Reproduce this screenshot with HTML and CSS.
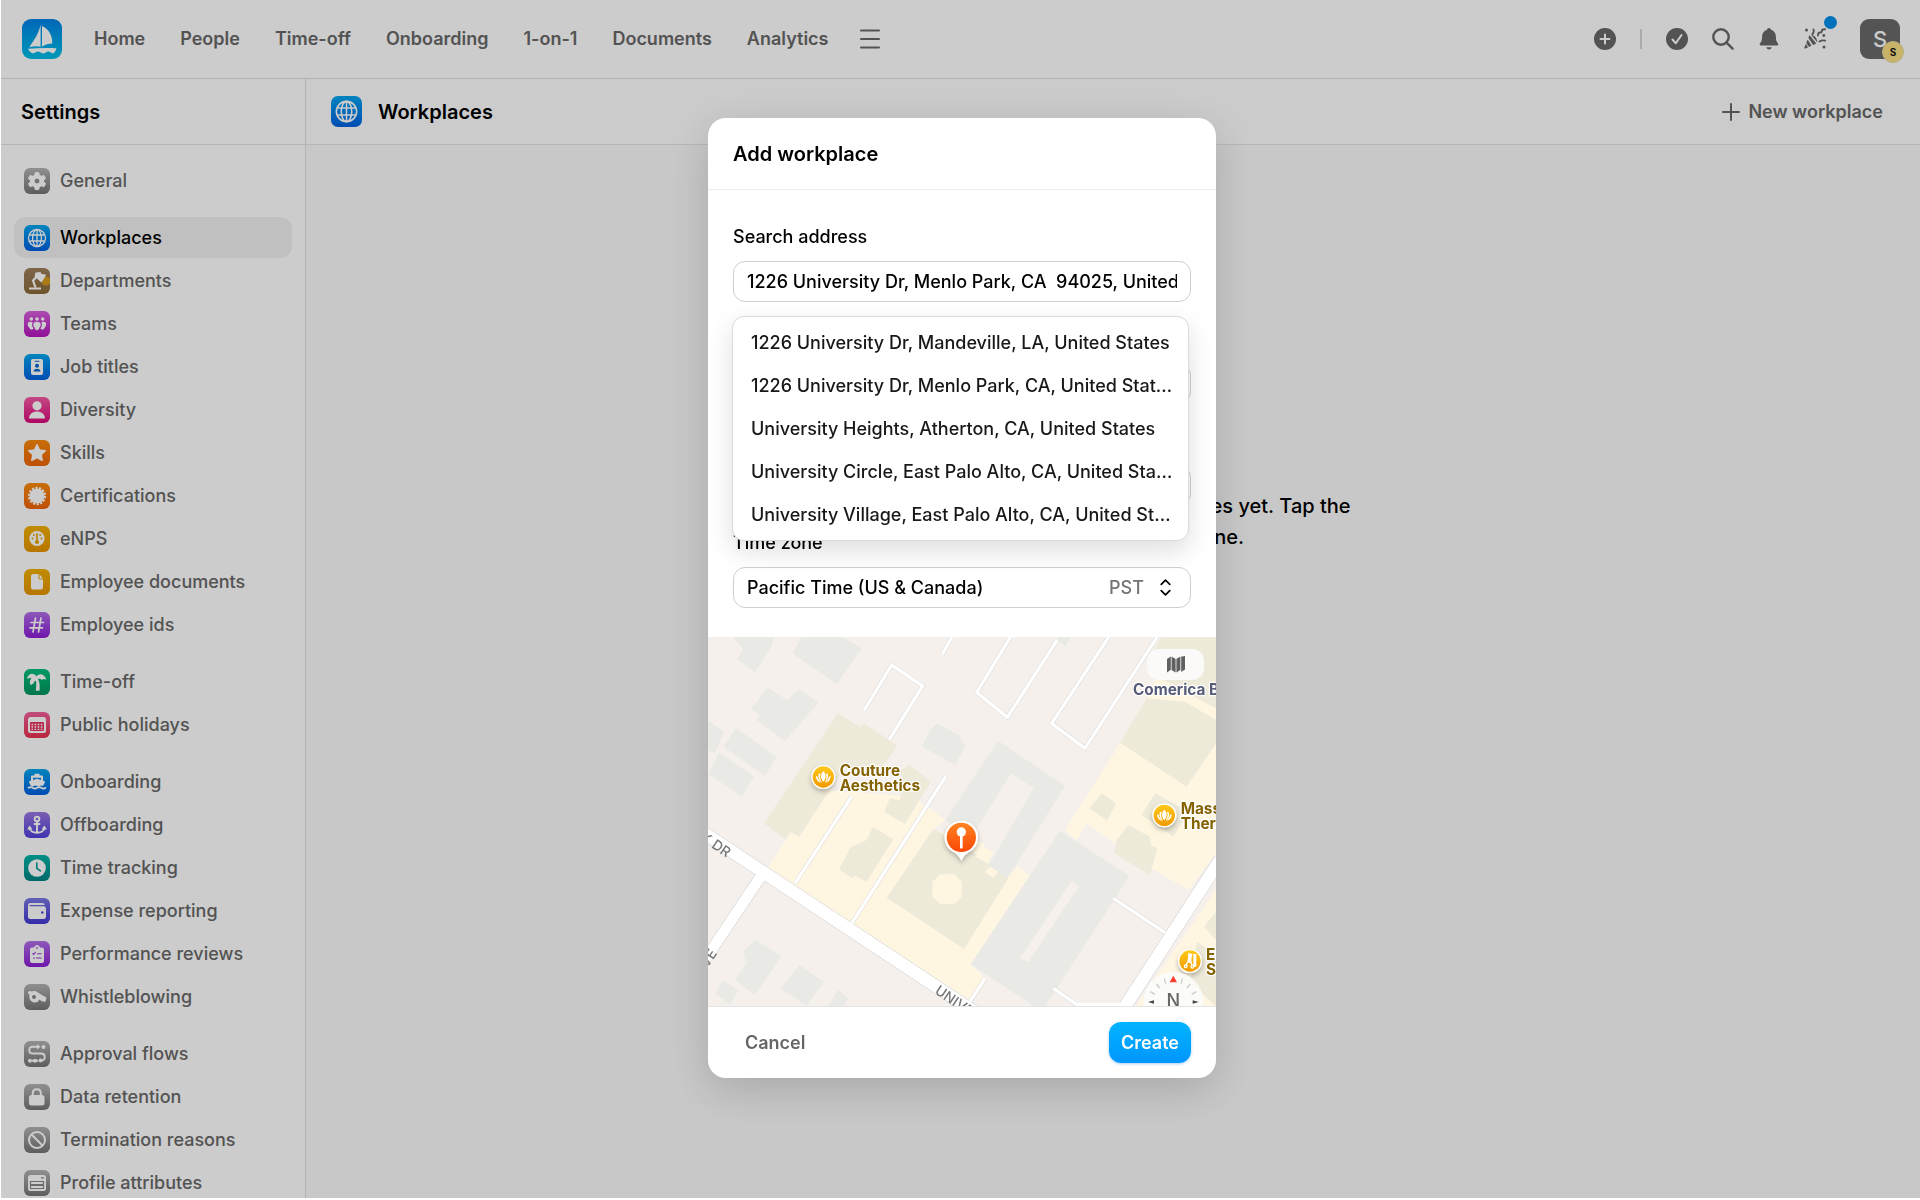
FILE: index.html
```html
<!DOCTYPE html>
<html lang="en">
<head>
<meta charset="utf-8">
<meta name="viewport" content="width=device-width, initial-scale=1">
<title>Workplaces – Settings</title>
<link rel="stylesheet" href="styles.css">
</head>
<body>
<svg class="defs" aria-hidden="true">
  <symbol id="globe" viewBox="0 0 26 26"><g fill="none" stroke="#fff" stroke-width="1.300"><circle cx="13" cy="13" r="8.500"/><ellipse cx="13" cy="13" rx="4.400" ry="8.500"/><path d="M13 4.500v17M5.500 10h15M5.500 16h15"/></g></symbol>
  <symbol id="lotus" viewBox="-24 -24 48 48"><path fill="#fff" d="M0-17c9 8 9 22 0 31c-9-9-9-23 0-31zM-12-11c-5 8-3 20 8 26c-6-8-7-17-4-24zM12-11c5 8 3 20-8 26c6-8 7-17 4-24zM-22-3c0 12 7 19 18 19c-8-4-12-10-13-17zM22-3c0 12-7 19-18 19c8-4 12-10 13-17z"/></symbol>
</svg>

<div class="app">
  <header class="topbar">
    <a class="logo" href="#" aria-label="Home page">
      <svg viewBox="0 0 40 40"><path fill="#fff" d="M18.600 5.500v22.300C15 26.900 11 27 7.500 28.200C11 22 16.500 16 18.600 5.500zM20 7c6.500 3 10.500 9 10.300 17.500c-3.500.2-7 1-10.300 3z"/><path fill="#fff" d="M6 29.800c9-.8 18-1.200 28.500-.6c-.6 2.200-1.700 3.800-3.100 5.300c-2-.2-3.200-1.900-5-1.900c-2 0-3 2-5.200 2s-3.200-2-5.200-2s-3.200 1.900-5.500 1.900c-2.100-1-3.600-2.700-4.500-4.700z"/></svg>
    </a>
    <nav class="nav" aria-label="Main">
      <a href="#">Home</a><a href="#">People</a><a href="#">Time-off</a><a href="#">Onboarding</a><a href="#">1-on-1</a><a href="#">Documents</a><a href="#">Analytics</a>
    </nav>
    <button class="icon-btn menu" aria-label="More"><svg viewBox="0 0 22 22"><path d="M2 2.500h18M2 11h18M2 19.500h18" fill="none" stroke="currentColor" stroke-width="2" stroke-linecap="round"/></svg></button>
    <div class="tools">
      <button class="icon-btn" aria-label="Add"><svg viewBox="0 0 22 22"><circle cx="11" cy="11" r="11" fill="currentColor"/><path d="M11 6.500v9M6.500 11h9" stroke="#fff" stroke-width="2" stroke-linecap="round"/></svg></button>
      <span class="divider"></span>
      <button class="icon-btn" aria-label="Tasks"><svg viewBox="0 0 22 22"><circle cx="11" cy="11" r="11" fill="currentColor"/><path d="M6.500 11.500l3.300 3.800L15.500 7" fill="none" stroke="#fff" stroke-width="2" stroke-linecap="round" stroke-linejoin="round"/></svg></button>
      <button class="icon-btn" aria-label="Search"><svg viewBox="0 0 22 22"><g fill="none" stroke="currentColor" stroke-width="2.400" stroke-linecap="round"><circle cx="9" cy="9" r="7.700"/><path d="M14.800 14.800l5.800 5.800"/></g></svg></button>
      <button class="icon-btn" aria-label="Notifications"><svg viewBox="0 0 22 22"><path fill="currentColor" d="M11 0c1.200 0 1.900.8 2 1.700c3.300 1 4.800 3.800 4.900 6.800c.1 4.200.9 5.500 2 6.700c.8.900.5 2.300-.9 2.300H3c-1.400 0-1.700-1.400-.9-2.300c1.100-1.200 1.900-2.500 2-6.700C4.200 5.500 5.700 2.700 9 1.700C9.100.8 9.800 0 11 0zM8.300 19.200h5.400c-.4 1.500-1.400 2.200-2.700 2.200s-2.300-.7-2.700-2.200z"/></svg></button>
      <button class="icon-btn news" aria-label="What's new"><svg viewBox="0 0 22 22"><g fill="none" stroke="currentColor" stroke-width="1.900" stroke-linecap="round"><path d="M9.500 1.500q.8 2.500-1 4.500M14 7.500q-.3-3 2.200-3q1.800 0 1.600-1.800q0-1.600 3.200-1.400M15.500 13.500q2.500-1.800 5.500-.8"/></g><path fill="currentColor" d="M3.600 11.600l3.900 6l-2.500 1.300l-2.700-4zM5.600 7.200l6.700 8.400l-3.200 1.500l-4.800-7.300zM7 6.800c3.800.6 6.200 3.600 6.400 7.600zM1.900 15.900l2.200 3.400l-2.500 1.200q-1.700.5-1.200-1.200z"/><circle cx="2.500" cy="2" r="1.500" fill="currentColor"/><circle cx="19.800" cy="7.500" r="1.400" fill="currentColor"/><circle cx="20" cy="19" r="1.500" fill="currentColor"/></svg></button>
      <button class="avatar" aria-label="Account">S<span class="avatar-badge">S</span></button>
    </div>
  </header>

  <div class="columns">
    <aside class="sidebar">
      <h2 class="bar sidebar-title">Settings</h2>
      <nav class="settings" aria-label="Settings">
        <div class="group">
          <a href="#"><svg class="tile gray" viewBox="0 0 26 26"><path fill="#fff" fill-rule="evenodd" stroke="#fff" stroke-width="1" stroke-linejoin="round" d="M11.300 4.500h3.400l.6 2.700l2 1.100l2.600-.9l1.700 3l-2 1.800v1.700l2 1.800l-1.700 3l-2.600-.9l-2 1.100l-.6 2.600h-3.400l-.6-2.600l-2-1.100l-2.600.9l-1.700-3l2-1.800v-1.700l-2-1.800l1.700-3l2.600.9l2-1.100zM13 10a3 3 0 1 0 0 6a3 3 0 1 0 0-6z"/></svg>General</a>
        </div>
        <div class="group">
          <a class="current" href="#" aria-current="page"><svg class="tile blue"><use href="#globe"/></svg>Workplaces</a>
          <a href="#"><svg class="tile brown" viewBox="0 0 26 26"><circle cx="22" cy="13" r="4.500" fill="#ffb400" opacity=".6"/><path fill="#fff" d="M11.500 4.500l5-.5l1 2l4.500.5l-1 2.500l-3.500 5.500l-7-6zM5 19.500h12v2H5z"/><path d="M11.500 19.500l-2.500-7l4.500-4.500" fill="none" stroke="#fff" stroke-width="2.200" stroke-linejoin="round"/></svg>Departments</a>
          <a href="#"><svg class="tile magenta" viewBox="0 0 26 26"><g fill="#fff"><circle cx="7.300" cy="8" r="1.800"/><circle cx="13" cy="8" r="1.800"/><circle cx="18.700" cy="8" r="1.800"/><path d="M8.600 11.500c-1 2-.6 4 1 6c-1.800 1.700-3.600 1-4.200-.8C3.300 15 3 11 6 10.800c1 0 2 .1 2.600.7zM17.400 11.500c1 2 .6 4-1 6c1.800 1.700 3.600 1 4.200-.8c2.100-1.700 2.400-5.700-.6-5.900c-1 0-2 .1-2.600.7zM13 10.800c5 0 4 4.700 2.300 6c-.3 3.200-4.300 3.200-4.600 0c-1.700-1.300-2.700-6 2.300-6z"/></g></svg>Teams</a>
          <a href="#"><svg class="tile blue" viewBox="0 0 26 26"><rect x="7" y="5" width="12" height="16" rx="2" fill="#fff"/><g fill="#06c"><rect x="10.500" y="6.800" width="5" height="1" rx=".5"/><circle cx="13" cy="11.800" r="2"/><path d="M9.500 17.500c0-3.800 7-3.800 7 0z"/></g></svg>Job titles</a>
          <a href="#"><svg class="tile pink" viewBox="0 0 26 26"><circle cx="13" cy="8.800" r="4.600" fill="#fff"/><path fill="#fff" d="M5 21.500c0-9.500 16-9.500 16 0z"/></svg>Diversity</a>
          <a href="#"><svg class="tile orange" viewBox="0 0 26 26"><path fill="#fff" stroke="#fff" stroke-width="1.500" stroke-linejoin="round" d="M13 4.800l2.500 5.200l5.800.7l-4.200 4l1.100 5.600L13 17.500l-5.200 2.800l1.100-5.600l-4.200-4l5.800-.7z"/></svg>Skills</a>
          <a href="#"><svg class="tile orange" viewBox="0 0 26 26"><circle cx="13" cy="13" r="7.500" fill="#fff"/><circle cx="13" cy="13" r="8.200" fill="none" stroke="#fff" stroke-width="2" stroke-dasharray="2.200 1.480"/></svg>Certifications</a>
          <a href="#"><svg class="tile yellow" viewBox="0 0 26 26"><circle cx="13" cy="12.500" r="7.600" fill="#fff"/><g fill="#e6a000"><circle cx="8.500" cy="12.500" r="1"/><circle cx="17.500" cy="12.500" r="1"/><circle cx="9.800" cy="9" r="1"/><circle cx="16.200" cy="9" r="1"/><circle cx="13" cy="16" r="2"/><rect x="12.200" y="7" width="1.600" height="8" rx=".8"/></g></svg>eNPS</a>
          <a href="#"><svg class="tile yellow" viewBox="0 0 26 26"><path fill="#fff" d="M9 5h5.500v4.200q0 1.300 1.300 1.300H19V18.500q0 2-2 2H9q-2 0-2-2V7q0-2 2-2zM15.500 5.500l3.500 4h-3.500z"/></svg>Employee documents</a>
          <a href="#"><svg class="tile purple" viewBox="0 0 26 26"><path fill="none" stroke="#fff" stroke-width="1.700" stroke-linecap="round" d="M11.500 6L9 20M17 6l-2.500 14M7 10.500h12.500M6 15.800h12.500"/></svg>Employee ids</a>
        </div>
        <div class="group">
          <a href="#"><svg class="tile green" viewBox="0 0 26 26"><path fill="#fff" d="M12.500 7.500c2-3.500 8-3 10 3.500c-2-1.500-3.500-1-4.500 0c-1.200-1.300-2.500-1.500-4-1.300c1.800 3.500 2 7.500 1.500 12h-3.700c.5-4.500.7-7.500.2-10c-1.500.5-2.500 1.300-2.700 3c-1 .1-1.600.6-2.300 1.600c-2-2.500-1-5.300.5-6.800c-1.500-.8-2.800-.5-4.500.5c.8-5.500 7-7 9.500-2.500z"/></svg>Time-off</a>
          <a href="#"><svg class="tile rose" viewBox="0 0 26 26"><rect x="4" y="5" width="18" height="16" rx="2.500" fill="#fff"/><rect x="6" y="10" width="14" height="9" rx="1" fill="#e8335f"/><path d="M7.500 12.500h11M7.500 15h11M7.500 17.300h11" stroke="#fff" stroke-width="1.300" stroke-dasharray="1.600 1.500"/></svg>Public holidays</a>
        </div>
        <div class="group">
          <a href="#"><svg class="tile blue" viewBox="0 0 26 26"><path fill="#fff" d="M10.500 4.800h5v1.700h2.500q1 0 1 1v4l1.500.7q.8.500.3 1.400L19 17q-1.500-.8-3 0t-3 0t-3 0t-3 0l-1.800-3.400q-.5-.9.300-1.400L7 11.500v-4q0-1 1-1h2.500z"/><path fill="#0a84e8" d="M9 8.700h8v2.200l-4-1.200l-4 1.200z"/><path d="M4.500 18.800q2-1.500 4.200 0t4.300 0t4.300 0t4.200 0" fill="none" stroke="#fff" stroke-width="1.700" stroke-linecap="round"/></svg>Onboarding</a>
          <a href="#"><svg class="tile violet" viewBox="0 0 26 26"><g fill="none" stroke="#fff" stroke-width="1.900" stroke-linecap="round"><circle cx="13" cy="7" r="2.300"/><path d="M13 9.500v11M10.500 12h5M5.500 15.500c.5 7 14.500 7 15 0"/></g><path fill="#fff" d="M3 17.500l2.800-4l2.700 4zM17.500 17.500l2.700-4l2.800 4z"/></svg>Offboarding</a>
          <a href="#"><svg class="tile teal" viewBox="0 0 26 26"><circle cx="13" cy="13" r="8.800" fill="#fff"/><path d="M12.800 8v5.300l3.600 2.600" fill="none" stroke="#009a92" stroke-width="1.600" stroke-linecap="round"/></svg>Time tracking</a>
          <a href="#"><svg class="tile indigo" viewBox="0 0 26 26"><path fill="#fff" d="M6.500 5h12q2 0 2.200 2H6q-.7 0-.7.600t.7.700h13.500q2.500 0 2.500 2.400v8q0 2.300-2.500 2.300h-13Q4 21 4 18.500v-11Q4 5 6.500 5z"/><circle cx="18.300" cy="14.500" r="1.200" fill="#4b43d8"/></svg>Expense reporting</a>
          <a href="#"><svg class="tile purple" viewBox="0 0 26 26"><path fill="#fff" d="M8 6.500h2q.5-2.500 3-2.500t3 2.500h2q2 0 2 2V20q0 2-2 2H8q-2 0-2-2V8.500q0-2 2-2z"/><path d="M8.800 12.500l1 1l1.600-2.200M13.500 12.800h3.700M9.500 17h1M12.500 17h4.700" fill="none" stroke="#9537dd" stroke-width="1.100" stroke-linecap="round"/><circle cx="13" cy="7" r=".9" fill="#a45be0"/></svg>Performance reviews</a>
          <a href="#"><svg class="tile gray" viewBox="0 0 26 26"><path fill="#fff" d="M4.500 7.500q1.500-1.200 3 0q4-1.500 7 1.500l8 4.500l-1 4q-3 1-6-2q-2.500 4.500-7 2.500q-4-2-3-7.500q-2.500-1-1-3z"/><circle cx="10" cy="13" r="2" fill="#888"/></svg>Whistleblowing</a>
        </div>
        <div class="group">
          <a href="#"><svg class="tile gray" viewBox="0 0 26 26"><path d="M14.500 5.800H9c-5 0-5 6.700 0 6.700h8c5 0 5 7 0 7M8 19.800h6" fill="none" stroke="#fff" stroke-width="1.900"/><g fill="#fff"><path d="M13 3l3.500 2.800L13 8.600z"/><circle cx="19.500" cy="6" r="2"/><circle cx="6" cy="19.800" r="2"/><circle cx="11" cy="19.800" r="2"/><circle cx="16.500" cy="19.500" r="2"/></g></svg>Approval flows</a>
          <a href="#"><svg class="tile gray" viewBox="0 0 26 26"><rect x="5" y="11" width="15.500" height="10.500" rx="2.500" fill="#fff"/><path d="M8.800 11.500V9.300c0-5.300 8-5.300 8 0v2.200" fill="none" stroke="#fff" stroke-width="2"/></svg>Data retention</a>
          <a href="#"><svg class="tile gray" viewBox="0 0 26 26"><g fill="none" stroke="#fff" stroke-width="2"><circle cx="13" cy="13" r="8"/><path d="M7.300 7.300l11.400 11.400"/></g></svg>Termination reasons</a>
          <a href="#"><svg class="tile gray" viewBox="0 0 26 26"><rect x="4" y="5" width="18" height="16" rx="2.500" fill="#fff"/><path d="M6.500 11.500h13v3h-13zM6.500 15.500h13v3h-13z" fill="none" stroke="#888" stroke-width="1.200"/><path d="M17 7.800h3" stroke="#888" stroke-width="1.200"/></svg>Profile attributes</a>
        </div>
      </nav>
    </aside>

    <main class="main">
      <div class="bar page-head">
        <svg class="tile large blue"><use href="#globe"/></svg>
        <h1>Workplaces</h1>
        <button class="new-btn"><svg viewBox="0 0 18 18"><path d="M9 1v16M1 9h16" stroke="currentColor" stroke-width="2" stroke-linecap="round"/></svg>New workplace</button>
      </div>
      <div class="empty">
        <p>You have not created any workplaces yet. Tap the<br>button above to create one.</p>
      </div>
    </main>
  </div>
</div>

<div class="overlay">
  <form class="modal" role="dialog" aria-labelledby="modal-title">
    <h2 class="modal-title" id="modal-title">Add workplace</h2>
    <div class="fields">
      <div class="field">
        <label for="search">Search address</label>
        <input id="search" type="text" value="1226 University Dr, Menlo Park, CA  94025, United States">
        <div class="suggestions">
          <button type="button">1226 University Dr, Mandeville, LA, United States</button>
          <button type="button">1226 University Dr, Menlo Park, CA, United States</button>
          <button type="button">University Heights, Atherton, CA, United States</button>
          <button type="button">University Circle, East Palo Alto, CA, United States</button>
          <button type="button">University Village, East Palo Alto, CA, United States</button>
        </div>
      </div>
      <div class="field"><label for="name">Name</label><input id="name" type="text"></div>
      <div class="field"><label for="address">Address</label><input id="address" type="text"></div>
      <div class="field">
        <label for="zone">Time zone</label>
        <div class="select">
          <select id="zone"><option>Pacific Time (US &amp; Canada)</option></select>
          <span class="zone-code">PST</span>
          <svg viewBox="0 0 10 16"><path d="M1 5l4-4l4 4M1 11l4 4l4-4" fill="none" stroke="currentColor" stroke-width="1.600" stroke-linecap="round" stroke-linejoin="round"/></svg>
        </div>
      </div>
    </div>

    <div class="map">
      <svg class="map-art" viewBox="24 21 1524 1107" preserveAspectRatio="xMidYMid slice">
        <defs>
          <linearGradient id="gold" x2="0" y2="1"><stop stop-color="#ffc919"/><stop offset="1" stop-color="#f09a00"/></linearGradient>
          <linearGradient id="ember" x2="0" y2="1"><stop stop-color="#ff8420"/><stop offset="1" stop-color="#f94706"/></linearGradient>
          <filter id="drop" x="-40%" y="-40%" width="180%" height="180%"><feDropShadow dx="0" dy="8" stdDeviation="8" flood-opacity=".28"/></filter>
        </defs>
        <rect x="0" y="0" width="1600" height="1160" fill="#f5f0ec"/>
        <!-- commercial blocks -->
        <g fill="#fff6e2">
          <path d="M205 712L275 605L300 622L380 480L640 500L735 570L700 600L850 640L870 700L920 740L955 710L987 738L812 1003L855 1045L805 1125L780 1110z"/>
          <path d="M1095 600L1260 340L1345 200L1410 22L1548 22V670L1465 780L1350 712L1160 580L1130 630z"/>
          <path d="M1560 760V1140H1300z"/>
        </g>
        <!-- buildings -->
        <g fill="#eeead9">
          <path d="M413 250L480 292L492 280L592 347L545 415L435 410L297 620L275 607L255 628L192 580z"/>
          <path d="M628 402L692 455L665 500L615 582L552 545L570 505L600 510L610 450L600 425z"/>
          <path d="M518 590L580 628L500 755L465 737L455 745L417 717L452 652L500 630z"/>
          <path d="M700 597L760 630L855 690L925 745L792 957L560 803z"/>
          <path d="M1385 22H1548V235L1390 150L1340 100z"/>
          <path d="M1340 205L1455 215L1548 270V340L1460 470L1260 338z"/>
          <path d="M1205 490L1248 520L1222 572L1168 535z"/>
          <path d="M1365 490L1440 530L1450 570L1420 620L1325 555z"/>
          <path d="M1285 585L1350 620L1352 645L1372 655L1350 735L1242 670L1250 630z"/>
          <path d="M1548 845L1512 890L1548 930zM1490 935L1548 975V1128L1470 1060z"/>
        </g>
        <path fill="#fff6e2" d="M722 733L762 733L785 755V800L762 822H722L697 800V755z"/>
        <g fill="#e9e9e5">
          <path d="M100 22H220L215 50L165 127L110 88L130 60zM305 22H430L485 55L410 163L277 70zM203 173L262 210L298 178L355 218L255 333L170 270L180 255L152 238zM22 270L72 305L45 370L22 360zM108 295L230 380L195 438L70 350zM58 368L163 440L125 500L25 432zM712 280L780 318L782 332L798 345L765 405L667 350L690 300z"/>
          <path d="M1068 22H1112L1095 50z"/>
          <path d="M895 333L1095 468L922 745L866 705L1002 475L933 430L815 620L735 570z"/>
          <path fill-rule="evenodd" d="M1080 603L1288 738L1035 1130H1005L812 1003zM1115 752L1138 768L985 997L960 985z"/>
          <path d="M165 930L245 978L165 1095L105 1050L140 1000L128 965zM298 1005L372 1055L320 1128L242 1075zM70 1050L115 1080L90 1125L45 1090zM415 1080L445 1105L430 1128H385z"/>
        </g>
        <path fill="#fff6e2" d="M850 650L882 668L862 700L825 680zM870 710L895 725L880 742L855 727z"/>
        <!-- roads: casing, then surface -->
        <g fill="none" stroke-linejoin="round">
          <g stroke="#d9d9d9">
            <path stroke-width="13" d="M455 500L285 760M738 438L455 880M493 240L575 105L668 168L568 328M757 20L727 72M932 20L830 187L922 262L1072 30M1227 20L1055 280L1155 355L1372 20M1240 805L1395 908M1060 1075L1140 1130M855 1045L800 1130"/>
            <path stroke-width="41" d="M0 601L830 1150M1560 690L1262 1150"/><path stroke-width="36" d="M182 740L0 1012"/>
          </g>
          <g stroke="#fff">
            <path stroke-width="10" d="M455 500L285 760M738 438L455 880M493 240L575 105L668 168L568 328M757 20L727 72M932 20L830 187L922 262L1072 30M1227 20L1055 280L1155 355L1372 20M1240 805L1395 908M1060 1075L1140 1130M855 1045L800 1130"/>
            <path stroke-width="37" d="M0 601L830 1150M1560 690L1262 1150"/><path stroke-width="32" d="M182 740L0 1012"/>
            <path stroke-width="16" d="M1130 1126H1270"/>
          </g>
        </g>
        <g class="street">
          <text transform="translate(-26 612) rotate(34)">AK DR</text>
          <text transform="translate(702 1088) rotate(34)">UNIVERSITY DR</text>
          <text transform="translate(8 1038) rotate(-57)">AVE</text>
        </g>
        <!-- places -->
        <g filter="url(#drop)">
          <g fill="#fff"><circle cx="370" cy="441" r="36"/><circle cx="1393" cy="556" r="36"/><circle cx="1470" cy="993" r="36"/></g>
          <path fill="#fff" d="M784 572a50 50 0 0 1 22 95Q793 674 784 692Q775 674 762 667a50 50 0 0 1 22-95z"/>
        </g>
        <g fill="url(#gold)"><circle cx="370" cy="441" r="32"/><circle cx="1393" cy="556" r="32"/><circle cx="1470" cy="993" r="32"/></g>
        <use href="#lotus" x="346" y="417" width="48" height="48"/>
        <use href="#lotus" x="1369" y="532" width="48" height="48"/>
        <g fill="none" stroke="#fff" stroke-width="4"><path d="M1466 972L1476 1006M1476 972L1458 1006"/><circle cx="1457" cy="1009" r="4"/><circle cx="1477" cy="1010" r="4"/></g>
        <path fill="#fff" d="M1466 968L1476 972L1473 998H1462zM1480 972h9v38h-9z"/>
        <circle cx="784" cy="622" r="44" fill="url(#ember)"/>
        <circle cx="784" cy="606" r="14" fill="#fff"/><path d="M784 618v34" stroke="#fff" stroke-width="8" stroke-linecap="round"/>
        <g class="place">
          <text x="419" y="437">Couture</text><text x="419" y="484">Aesthetics</text>
          <text x="1442" y="551">Massage</text><text x="1442" y="598">Therapy</text>
          <text x="1518" y="989">Elite</text><text x="1518" y="1036">Salon</text>
          <text class="bank" x="1299" y="195">Comerica Bank</text>
        </g>
        <!-- compass -->
        <g>
          <circle cx="1420" cy="1116" r="90" fill="#fbfbf9" opacity=".95"/>
          <path fill="#ff3b30" d="M1420 1037L1431 1057H1409z"/>
          <path d="M1393 1046l4 15M1447 1046l-4 15M1369 1062l10 12M1471 1062l-10 12M1351 1085l14 8M1489 1085l-14 8" stroke="#ccc" stroke-width="4"/>
          <path fill="#444" d="M1344 1116l18-5v10zM1496 1116l-18-5v10z"/>
          <text class="north" x="1420" y="1132" text-anchor="middle">N</text>
        </g>
      </svg>
      <button class="map-toggle" type="button" aria-label="Map type"><svg viewBox="0 0 18 17"><path fill="currentColor" d="M0 3l3.800-2.500v13.300L0 16.500zM4.600.5L8.600 3v13.500l-4-2.500zM9.400 3l4-2.500V14l-4 2.500zM14.200.5H15.500L18 0v13.500l-3.800 2.500z"/></svg></button>
    </div>

    <div class="actions">
      <button class="cancel" type="button">Cancel</button>
      <button class="create" type="submit">Create</button>
    </div>
  </form>
</div>
</body>
</html>
```
FILE: styles.css
```css
* { box-sizing: border-box; }

body {
  margin: 0;
  background: #fff;
  color: #000;
  font: 500 18px/24px Inter, "Liberation Sans", sans-serif;
  overflow: hidden;
}

h1, h2, p { margin: 0; }
h1, h2 { font-size: 20px; line-height: 28px; font-weight: 600; }
a { color: inherit; text-decoration: none; }
button, input, select { font: inherit; color: inherit; border: 0; margin: 0; padding: 0; background: none; }
svg { display: block; flex: none; }
.defs { position: absolute; width: 0; height: 0; }

.app {
  display: flex;
  flex-direction: column;
  height: calc(100vh - 2px);
  margin-left: 1px;
  overflow: hidden;
}

/* Top bar */
.topbar {
  display: flex;
  flex: none;
  align-items: center;
  height: 79px;
  padding: 0 20px 0 21px;
  border-bottom: 1px solid #dcdcdc;
  color: #686868;
}
.logo {
  width: 40px;
  height: 40px;
  border-radius: 9px;
  background: linear-gradient(#0081e6, #00bfe6);
}
.nav { display: flex; gap: 35px; margin-left: 32px; font-weight: 600; }
.icon-btn { width: 22px; height: 22px; }
.icon-btn svg { width: 22px; height: 22px; }
.menu { margin-left: 31px; }
.tools { display: flex; align-items: center; gap: 24px; margin-left: auto; }
.divider { width: 2px; height: 20px; background: #d6d6d6; }
.news { position: relative; }
.news::after {
  content: "";
  position: absolute;
  top: -12px;
  right: -11px;
  width: 13px;
  height: 13px;
  border-radius: 50%;
  background: #0090ec;
}
.avatar {
  position: relative;
  width: 40px;
  height: 40px;
  margin-left: 10px;
  border-radius: 9px;
  background: #696969;
  color: #fff;
  font-size: 22px;
}
.avatar-badge {
  position: absolute;
  right: -4px;
  bottom: -4px;
  width: 22px;
  height: 22px;
  border: 1px solid #e8dca0;
  border-radius: 50%;
  background: #fae082;
  color: #111;
  font-size: 10px;
  line-height: 20px;
  font-weight: 700;
}

/* Columns */
.columns { display: flex; flex: 1; min-height: 0; }
.bar {
  display: flex;
  flex: none;
  align-items: center;
  height: 66px;
  border-bottom: 1px solid #e4e4e4;
}
.sidebar { flex: none; width: 305px; border-right: 1px solid #e0e0e0; }
.sidebar-title { padding-left: 20px; }
.settings { display: flex; flex-direction: column; gap: 16px; padding: 15px 13px; }
.group { display: flex; flex-direction: column; gap: 2px; }
.group a {
  display: flex;
  align-items: center;
  gap: 10px;
  height: 41px;
  padding-left: 10px;
  border-radius: 12px;
  color: #686868;
}
.group .current { background: #f0f0f0; color: #000; }

.tile { width: 26px; height: 26px; border-radius: 6px; }
.tile.large { width: 31px; height: 31px; border-radius: 7px; }
.gray { background: linear-gradient(#b4b4b4, #757575); }
.blue { background: linear-gradient(#00a6ee, #0060e0); }
.brown { background: linear-gradient(#9f7f5c, #8a6a38); }
.magenta { background: linear-gradient(#d65fdd, #b414bd); }
.pink { background: linear-gradient(#f55aa5, #dc0a7c); }
.orange { background: linear-gradient(#fa8a0c, #ee6408); }
.yellow { background: linear-gradient(#f0b000, #e69400); }
.purple { background: linear-gradient(#b070e8, #8c1cd6); }
.green { background: linear-gradient(#00c07c, #00955c); }
.rose { background: linear-gradient(#f0609c, #e8304c); }
.violet { background: linear-gradient(#9a78e0, #5040dc); }
.teal { background: linear-gradient(#00b4a8, #008484); }
.indigo { background: linear-gradient(#7a78e4, #4238d4); }

/* Page */
.main { display: flex; flex: 1; flex-direction: column; background: #fafafa; }
.page-head { gap: 16px; padding: 0 37px 0 25px; background: #fefefe; }
.new-btn {
  display: flex;
  align-items: center;
  gap: 8px;
  margin-left: auto;
  color: #686868;
  font-weight: 600;
}
.new-btn svg { width: 18px; height: 18px; }
.empty {
  display: flex;
  flex: 1;
  justify-content: center;
  align-items: flex-start;
  padding-top: 346px;
  text-align: center;
  font-size: 20px;
  line-height: 31px;
}

/* Modal */
.overlay {
  position: fixed;
  inset: 0 0 2px 1px;
  display: grid;
  place-items: center;
  padding: 0 0 2px 3px;
  background: rgba(0, 0, 0, .2);
}
.modal {
  width: 508px;
  border-radius: 18px;
  background: #fff;
  box-shadow: 0 12px 44px rgba(0, 0, 0, .16);
}
.modal-title {
  display: flex;
  align-items: center;
  height: 72px;
  padding: 0 25px;
  border-bottom: 1px solid #ececec;
}
.fields { display: grid; gap: 25px; padding: 35px 25px 29px; }
.field { position: relative; display: grid; gap: 12px; }
.field > input, .select {
  width: 100%;
  height: 41px;
  padding: 0 13px;
  border: 1px solid #cfcfcf;
  border-radius: 12px;
  background: #fff;
}
.select { display: flex; align-items: center; padding-right: 19px; }
.select select { flex: 1; appearance: none; }
.zone-code { margin-right: 16px; color: #747474; }
.select svg { width: 11px; height: 17px; }

.suggestions {
  position: absolute;
  z-index: 1;
  top: calc(100% + 14px);
  left: -1px;
  right: 2px;
  padding: 4px;
  border: 1px solid #dadada;
  border-radius: 12px;
  background: #fff;
  box-shadow: 0 10px 26px rgba(0, 0, 0, .13);
}
.suggestions button {
  display: block;
  width: 100%;
  height: 43px;
  padding: 0 9px 0 14px;
  overflow: hidden;
  color: #181818;
  text-align: left;
  text-overflow: ellipsis;
  white-space: nowrap;
}

/* Map */
.map { position: relative; height: 369px; overflow: hidden; }
.map-art { width: 100%; height: 100%; }
.street { fill: #777; font-size: 42px; font-weight: 500; }
.place {
  fill: #846200;
  stroke: #fff;
  stroke-width: 7px;
  stroke-linejoin: round;
  paint-order: stroke;
  font-size: 46px;
  font-weight: 700;
}
.place .bank { fill: #565b78; }
.north { fill: #666; font-size: 54px; font-weight: 500; }
.map-toggle {
  position: absolute;
  top: 12px;
  right: 12px;
  display: grid;
  place-items: center;
  width: 57px;
  height: 31px;
  border-radius: 12px;
  background: #fbfaf8;
  color: #606060;
}
.map-toggle svg { width: 18px; height: 17px; }

.actions {
  display: flex;
  align-items: center;
  justify-content: space-between;
  height: 72px;
  padding: 0 25px;
  border-top: 1px solid #e4e4e4;
  font-weight: 600;
}
.cancel, .create { height: 41px; padding: 0 12px; border-radius: 12px; }
.cancel { color: #666; }
.create {
  background: linear-gradient(#00b4ff, #0096ff);
  box-shadow: 0 1px 3px rgba(0, 120, 220, .35);
  color: #fff;
}
```
